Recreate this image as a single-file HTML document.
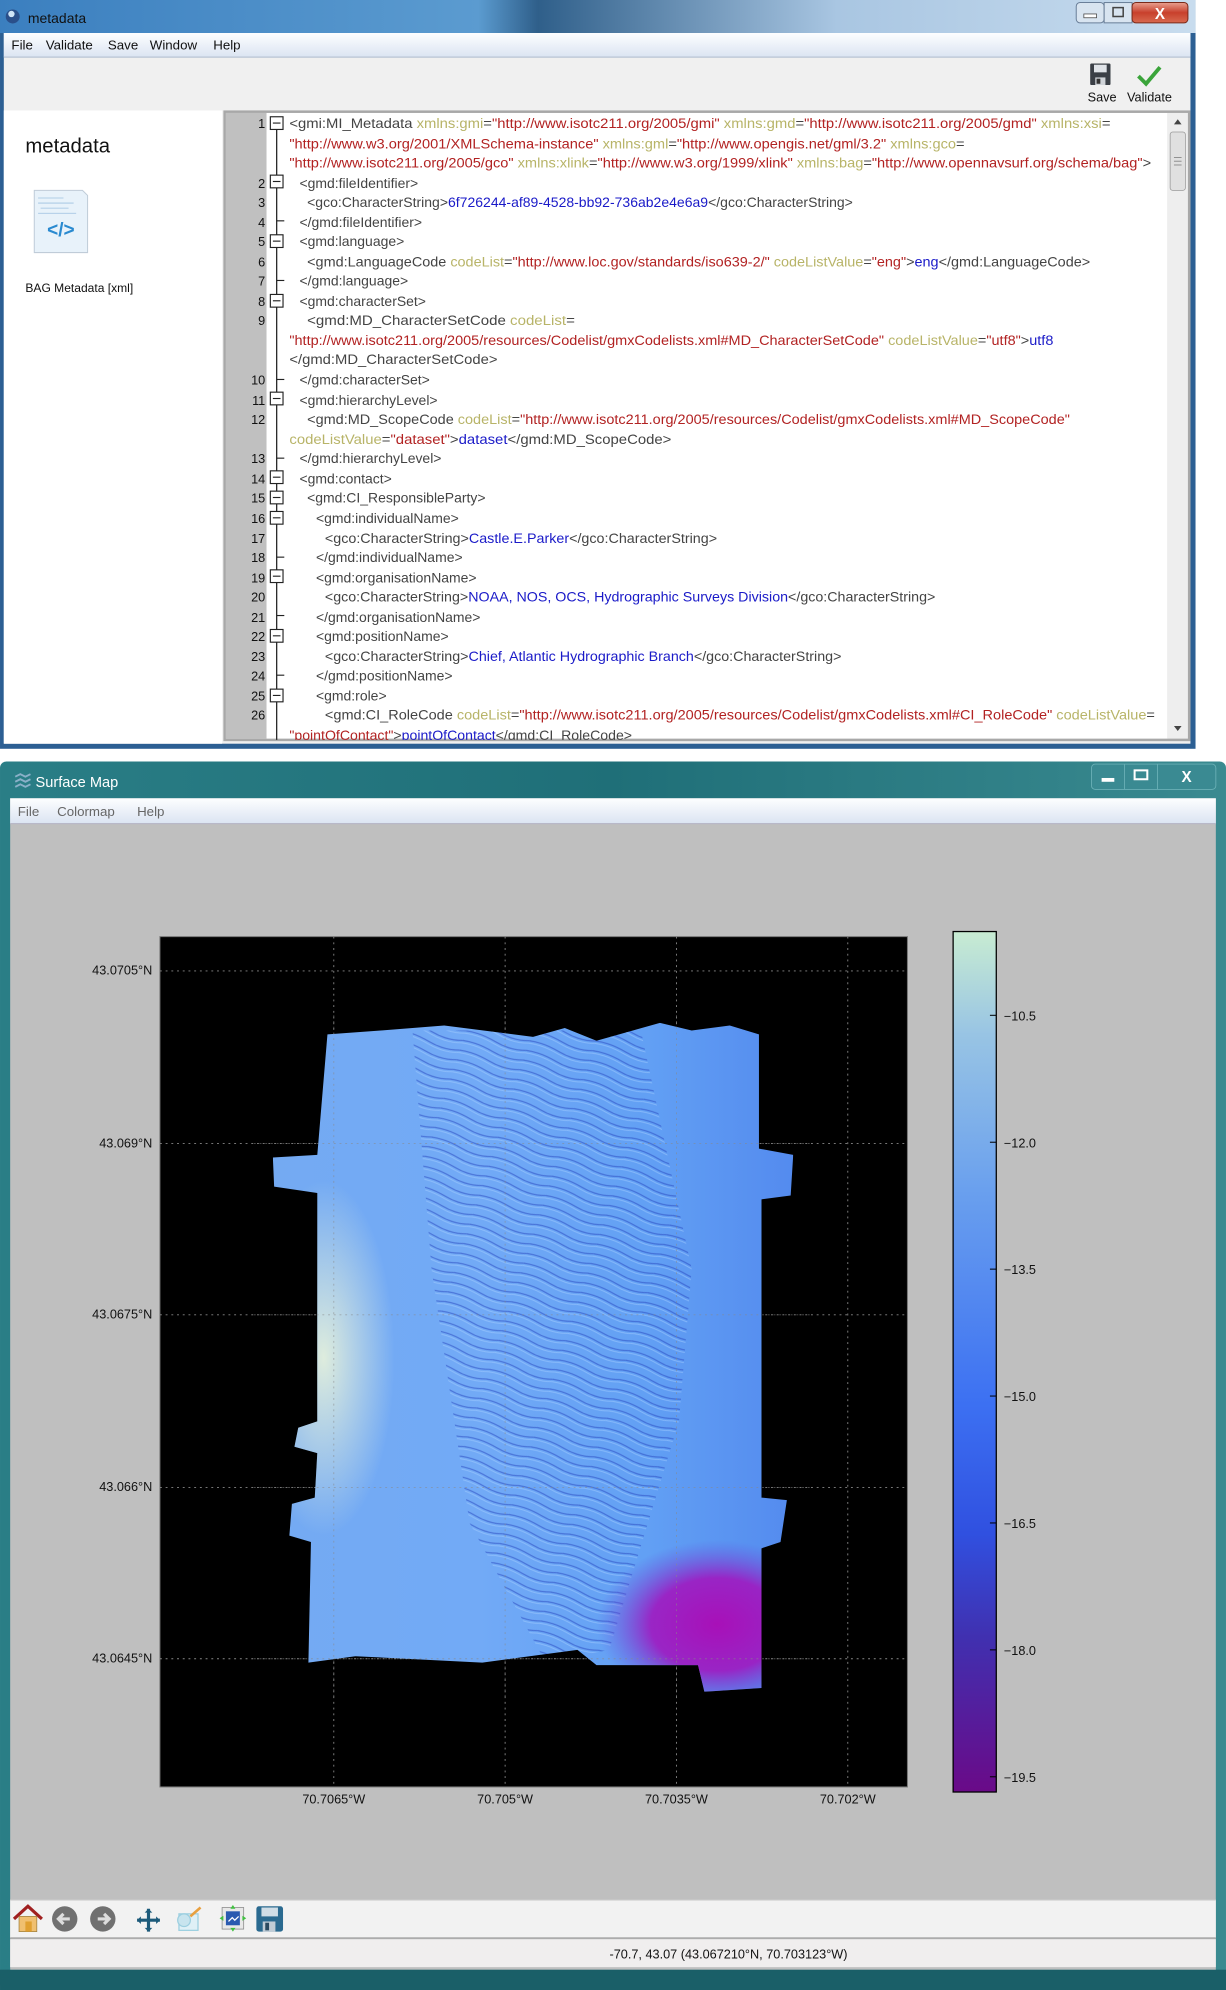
<!DOCTYPE html>
<html><head><meta charset="utf-8"><style>
html,body{margin:0;padding:0;background:#fff;width:1226px;height:1990px;overflow:hidden}
svg{display:block}
text{font-family:"Liberation Sans",sans-serif}
</style></head><body>
<svg width="1226" height="1990" viewBox="0 0 966 1568" xmlns="http://www.w3.org/2000/svg">
<defs>
<linearGradient id="tb1" x1="0" x2="1" y1="0" y2="0">
<stop offset="0" stop-color="#3b7fbf"/><stop offset="0.4" stop-color="#5b9bd0"/><stop offset="0.45" stop-color="#2f5f8a"/><stop offset="0.7" stop-color="#a9c6e2"/><stop offset="1" stop-color="#c8dcee"/></linearGradient>
<linearGradient id="menu1" x1="0" x2="0" y1="0" y2="1"><stop offset="0" stop-color="#fdfeff"/><stop offset="1" stop-color="#dbe4f2"/></linearGradient>
<linearGradient id="teal" x1="0" x2="1" y1="0" y2="0"><stop offset="0" stop-color="#2a7e86"/><stop offset="0.5" stop-color="#1f6f78"/><stop offset="1" stop-color="#3a8a90"/></linearGradient>
<linearGradient id="close" x1="0" x2="0" y1="0" y2="1"><stop offset="0" stop-color="#e8a090"/><stop offset="0.5" stop-color="#c8402c"/><stop offset="1" stop-color="#d86a50"/></linearGradient>
<linearGradient id="cbar" x1="0" x2="0" y1="0" y2="1">
<stop offset="0" stop-color="#c8ecd2"/><stop offset="0.12" stop-color="#98c4e4"/><stop offset="0.3" stop-color="#6aa0ee"/><stop offset="0.55" stop-color="#3c70f2"/><stop offset="0.7" stop-color="#3050e0"/><stop offset="0.82" stop-color="#4030b0"/><stop offset="1" stop-color="#6a0a88"/></linearGradient>
<linearGradient id="mapg" x1="0" x2="1" y1="0" y2="0">
<stop offset="0" stop-color="#74aaf2"/><stop offset="0.4" stop-color="#72aaf6"/><stop offset="0.7" stop-color="#62a0f4"/><stop offset="1" stop-color="#5288ee"/></linearGradient>
<radialGradient id="pale" cx="255" cy="1070" r="70" gradientUnits="userSpaceOnUse" gradientTransform="translate(255 1070) scale(0.8 2) translate(-255 -1070)">
<stop offset="0" stop-color="#e4f0dc" stop-opacity="0.95"/><stop offset="1" stop-color="#e4f0dc" stop-opacity="0"/></radialGradient>
<radialGradient id="purp" cx="565" cy="1280" r="95" gradientUnits="userSpaceOnUse" gradientTransform="translate(565 1280) scale(1 0.7) translate(-565 -1280)">
<stop offset="0" stop-color="#a810b8"/><stop offset="0.55" stop-color="#a018c0" stop-opacity="0.9"/><stop offset="1" stop-color="#6050e0" stop-opacity="0"/></radialGradient>
<pattern id="rip" width="50" height="8" patternUnits="userSpaceOnUse" patternTransform="rotate(18)">
<path d="M0 3 Q12 1 25 4 T50 3" fill="none" stroke="#2a48c0" stroke-width="1" opacity="0.55"/>
<path d="M0 5 Q12 3 25 6 T50 5" fill="none" stroke="#a8d0ff" stroke-width="0.8" opacity="0.5"/></pattern>
<clipPath id="edclip"><rect x="177" y="88" width="745" height="495"/></clipPath>
<clipPath id="mapclip"><polygon points="258,815 300,812 350,808 420,817 445,810 470,820 520,806 545,812 575,808 598,815 598,905 625,910 623,942 600,945 600,1180 620,1182 615,1215 600,1220 600,1330 555,1333 550,1312 470,1312 455,1300 380,1310 280,1305 243,1310 245,1215 228,1210 230,1185 248,1180 250,1145 232,1140 235,1125 250,1120 250,940 216,935 215,912 250,910"/></clipPath>
</defs>

<!-- TOP WINDOW -->
<rect x="0" y="0" width="942" height="590" fill="#2c5f93"/>
<rect x="0" y="0" width="942" height="26" fill="url(#tb1)"/>
<circle cx="10" cy="13" r="5.5" fill="#2a4f8a"/><circle cx="9" cy="11" r="2.5" fill="#cfe4f6"/>
<text x="22" y="18" font-size="11" fill="#111">metadata</text>
<rect x="848" y="2" width="22" height="16" rx="3" fill="#d8e4f0" stroke="#6a7f99" stroke-width="0.8"/>
<rect x="854" y="11" width="10" height="3" fill="#fff" stroke="#444" stroke-width="0.6"/>
<rect x="870" y="2" width="22" height="16" fill="#d8e4f0" stroke="#6a7f99" stroke-width="0.8"/>
<rect x="877" y="6" width="8" height="7" fill="none" stroke="#444" stroke-width="1.2"/>
<rect x="892" y="2" width="44" height="16" rx="3" fill="url(#close)" stroke="#7a2a1a" stroke-width="0.8"/>
<text x="914" y="15" font-size="12" font-weight="bold" fill="#fff" text-anchor="middle">X</text>
<rect x="3" y="26" width="935" height="560" fill="#f0f0f0"/>
<rect x="3" y="26" width="935" height="19" fill="url(#menu1)"/>
<line x1="3" y1="45" x2="938" y2="45" fill="none" stroke="#b8c4d4"/>
<g font-size="10.5" fill="#111"><text x="9" y="39">File</text><text x="36" y="39">Validate</text><text x="85" y="39">Save</text><text x="118" y="39">Window</text><text x="168" y="39">Help</text></g>
<rect x="859" y="50" width="16" height="17" rx="1" fill="#3a3f46"/><rect x="862" y="51" width="10" height="6" fill="#dfe3e8"/><rect x="863" y="61" width="8" height="6" fill="#cfd3d8"/><rect x="864" y="62" width="3" height="4" fill="#333"/>
<path d="M897 60 L903 66 L914 53" fill="none" stroke="#3aa43a" stroke-width="3"/>
<g font-size="10" fill="#111"><text x="857" y="80">Save</text><text x="888" y="80">Validate</text></g>
<rect x="3" y="87" width="172" height="499" fill="#fff"/>
<text x="20" y="120" font-size="16" fill="#111">metadata</text>
<path d="M27 150 L65 150 L69 154 L69 199 L27 199 Z" fill="#e8f2fa" stroke="#c0ccd8" stroke-width="0.8"/>
<g stroke="#9cc0e0" stroke-width="0.6"><line x1="30" y1="156" x2="50" y2="156"/><line x1="30" y1="160" x2="58" y2="160"/><line x1="32" y1="164" x2="54" y2="164"/><line x1="30" y1="168" x2="60" y2="168"/></g>
<text x="48" y="186" font-size="15" font-weight="bold" fill="#2a8ad0" text-anchor="middle">&lt;/&gt;</text>
<text x="20" y="230" font-size="9.5" fill="#111">BAG Metadata [xml]</text>
<rect x="176" y="87" width="762" height="497" fill="#a8a8a8"/>
<rect x="178" y="89" width="742" height="493" fill="#fff"/>
<rect x="178" y="89" width="32" height="493" fill="#c0c0c0"/>
<rect x="920" y="89" width="16" height="493" fill="#eeeeee"/>
<path d="M925 98 L928 94 L931 98 Z" fill="#444"/><path d="M925 572 L928 576 L931 572 Z" fill="#444"/>
<rect x="922" y="104" width="12" height="46" rx="2" fill="#e0e0e0" stroke="#999" stroke-width="0.6"/>
<g stroke="#777" stroke-width="0.6"><line x1="925" y1="124" x2="931" y2="124"/><line x1="925" y1="127" x2="931" y2="127"/><line x1="925" y1="130" x2="931" y2="130"/></g>
<g clip-path="url(#edclip)">
<line x1="218" y1="97" x2="218" y2="590" stroke="#222" stroke-width="1"/>
<g font-size="10" fill="#111" text-anchor="end">
<text x="209" y="101">1</text><text x="209" y="148">2</text><text x="209" y="163">3</text><text x="209" y="179">4</text><text x="209" y="194">5</text><text x="209" y="210">6</text><text x="209" y="225">7</text><text x="209" y="241">8</text><text x="209" y="256">9</text><text x="209" y="303">10</text><text x="209" y="319">11</text><text x="209" y="334">12</text><text x="209" y="365">13</text><text x="209" y="381">14</text><text x="209" y="396">15</text><text x="209" y="412">16</text><text x="209" y="428">17</text><text x="209" y="443">18</text><text x="209" y="459">19</text><text x="209" y="474">20</text><text x="209" y="490">21</text><text x="209" y="505">22</text><text x="209" y="521">23</text><text x="209" y="536">24</text><text x="209" y="552">25</text><text x="209" y="567">26</text>
</g>
<g fill="#fff" stroke="#222" stroke-width="0.9">
<rect x="213" y="92" width="10" height="10"/><rect x="213" y="138" width="10" height="10"/><rect x="213" y="185" width="10" height="10"/><rect x="213" y="232" width="10" height="10"/><rect x="213" y="309" width="10" height="10"/><rect x="213" y="371" width="10" height="10"/><rect x="213" y="387" width="10" height="10"/><rect x="213" y="403" width="10" height="10"/><rect x="213" y="449" width="10" height="10"/><rect x="213" y="496" width="10" height="10"/><rect x="213" y="543" width="10" height="10"/>
</g>
<g stroke="#222" stroke-width="0.9">
<line x1="215" y1="97" x2="221" y2="97"/><line x1="215" y1="143" x2="221" y2="143"/><line x1="215" y1="190" x2="221" y2="190"/><line x1="215" y1="237" x2="221" y2="237"/><line x1="215" y1="314" x2="221" y2="314"/><line x1="215" y1="376" x2="221" y2="376"/><line x1="215" y1="392" x2="221" y2="392"/><line x1="215" y1="408" x2="221" y2="408"/><line x1="215" y1="454" x2="221" y2="454"/><line x1="215" y1="501" x2="221" y2="501"/><line x1="215" y1="548" x2="221" y2="548"/>
<line x1="218" y1="174" x2="224" y2="174"/><line x1="218" y1="221" x2="224" y2="221"/><line x1="218" y1="299" x2="224" y2="299"/><line x1="218" y1="361" x2="224" y2="361"/><line x1="218" y1="439" x2="224" y2="439"/><line x1="218" y1="485" x2="224" y2="485"/><line x1="218" y1="532" x2="224" y2="532"/>
</g>
<g font-size="11" fill="#444">
<text x="228" y="101" textLength="647" lengthAdjust="spacingAndGlyphs">&lt;gmi:MI_Metadata  <tspan fill="#b8b468">xmlns:gmi</tspan>=<tspan fill="#b22222">"http://www.isotc211.org/2005/gmi"</tspan>  <tspan fill="#b8b468">xmlns:gmd</tspan>=<tspan fill="#b22222">"http://www.isotc211.org/2005/gmd"</tspan>  <tspan fill="#b8b468">xmlns:xsi</tspan>=</text>
<text x="228" y="117" textLength="532" lengthAdjust="spacingAndGlyphs"><tspan fill="#b22222">"http://www.w3.org/2001/XMLSchema-instance"</tspan>  <tspan fill="#b8b468">xmlns:gml</tspan>=<tspan fill="#b22222">"http://www.opengis.net/gml/3.2"</tspan>  <tspan fill="#b8b468">xmlns:gco</tspan>=</text>
<text x="228" y="132" textLength="679" lengthAdjust="spacingAndGlyphs"><tspan fill="#b22222">"http://www.isotc211.org/2005/gco"</tspan>  <tspan fill="#b8b468">xmlns:xlink</tspan>=<tspan fill="#b22222">"http://www.w3.org/1999/xlink"</tspan>  <tspan fill="#b8b468">xmlns:bag</tspan>=<tspan fill="#b22222">"http://www.opennavsurf.org/schema/bag"</tspan>&gt;</text>
<text x="236" y="148">&lt;gmd:fileIdentifier&gt;</text>
<text x="242" y="163" textLength="430" lengthAdjust="spacingAndGlyphs">&lt;gco:CharacterString&gt;<tspan fill="#1a1ac8">6f726244-af89-4528-bb92-736ab2e4e6a9</tspan>&lt;/gco:CharacterString&gt;</text>
<text x="236" y="179">&lt;/gmd:fileIdentifier&gt;</text>
<text x="236" y="194">&lt;gmd:language&gt;</text>
<text x="242" y="210" textLength="617" lengthAdjust="spacingAndGlyphs">&lt;gmd:LanguageCode  <tspan fill="#b8b468">codeList</tspan>=<tspan fill="#b22222">"http://www.loc.gov/standards/iso639-2/"</tspan>  <tspan fill="#b8b468">codeListValue</tspan>=<tspan fill="#b22222">"eng"</tspan>&gt;<tspan fill="#1a1ac8">eng</tspan>&lt;/gmd:LanguageCode&gt;</text>
<text x="236" y="225">&lt;/gmd:language&gt;</text>
<text x="236" y="241">&lt;gmd:characterSet&gt;</text>
<text x="242" y="256" textLength="211" lengthAdjust="spacingAndGlyphs">&lt;gmd:MD_CharacterSetCode  <tspan fill="#b8b468">codeList</tspan>=</text>
<text x="228" y="272" textLength="602" lengthAdjust="spacingAndGlyphs"><tspan fill="#b22222">"http://www.isotc211.org/2005/resources/Codelist/gmxCodelists.xml#MD_CharacterSetCode"</tspan>  <tspan fill="#b8b468">codeListValue</tspan>=<tspan fill="#b22222">"utf8"</tspan>&gt;<tspan fill="#1a1ac8">utf8</tspan></text>
<text x="228" y="287" textLength="164" lengthAdjust="spacingAndGlyphs">&lt;/gmd:MD_CharacterSetCode&gt;</text>
<text x="236" y="303">&lt;/gmd:characterSet&gt;</text>
<text x="236" y="319">&lt;gmd:hierarchyLevel&gt;</text>
<text x="242" y="334" textLength="601" lengthAdjust="spacingAndGlyphs">&lt;gmd:MD_ScopeCode  <tspan fill="#b8b468">codeList</tspan>=<tspan fill="#b22222">"http://www.isotc211.org/2005/resources/Codelist/gmxCodelists.xml#MD_ScopeCode"</tspan></text>
<text x="228" y="350" textLength="301" lengthAdjust="spacingAndGlyphs"><tspan fill="#b8b468">codeListValue</tspan>=<tspan fill="#b22222">"dataset"</tspan>&gt;<tspan fill="#1a1ac8">dataset</tspan>&lt;/gmd:MD_ScopeCode&gt;</text>
<text x="236" y="365">&lt;/gmd:hierarchyLevel&gt;</text>
<text x="236" y="381">&lt;gmd:contact&gt;</text>
<text x="242" y="396">&lt;gmd:CI_ResponsibleParty&gt;</text>
<text x="249" y="412">&lt;gmd:individualName&gt;</text>
<text x="256" y="428" textLength="309" lengthAdjust="spacingAndGlyphs">&lt;gco:CharacterString&gt;<tspan fill="#1a1ac8">Castle.E.Parker</tspan>&lt;/gco:CharacterString&gt;</text>
<text x="249" y="443">&lt;/gmd:individualName&gt;</text>
<text x="249" y="459">&lt;gmd:organisationName&gt;</text>
<text x="256" y="474" textLength="481" lengthAdjust="spacingAndGlyphs">&lt;gco:CharacterString&gt;<tspan fill="#1a1ac8">NOAA, NOS, OCS, Hydrographic Surveys Division</tspan>&lt;/gco:CharacterString&gt;</text>
<text x="249" y="490">&lt;/gmd:organisationName&gt;</text>
<text x="249" y="505">&lt;gmd:positionName&gt;</text>
<text x="256" y="521" textLength="407" lengthAdjust="spacingAndGlyphs">&lt;gco:CharacterString&gt;<tspan fill="#1a1ac8">Chief, Atlantic Hydrographic Branch</tspan>&lt;/gco:CharacterString&gt;</text>
<text x="249" y="536">&lt;/gmd:positionName&gt;</text>
<text x="249" y="552">&lt;gmd:role&gt;</text>
<text x="256" y="567" textLength="654" lengthAdjust="spacingAndGlyphs">&lt;gmd:CI_RoleCode  <tspan fill="#b8b468">codeList</tspan>=<tspan fill="#b22222">"http://www.isotc211.org/2005/resources/Codelist/gmxCodelists.xml#CI_RoleCode"</tspan>  <tspan fill="#b8b468">codeListValue</tspan>=</text>
<text x="228" y="583" textLength="270" lengthAdjust="spacingAndGlyphs"><tspan fill="#b22222">"pointOfContact"</tspan>&gt;<tspan fill="#1a1ac8">pointOfContact</tspan>&lt;/gmd:CI_RoleCode&gt;</text>
</g>
</g>

<!-- BOTTOM WINDOW -->
<rect x="0" y="600" width="966" height="968" rx="5" fill="url(#teal)"/>
<rect x="0" y="1552" width="966" height="16" fill="#1a5f68"/>
<path d="M12 612 l4 -2 l4 2 l4 -2 M12 616 l4 -2 l4 2 l4 -2 M12 620 l4 -2 l4 2 l4 -2" fill="none" stroke="#8ab0c8" stroke-width="1.5"/>
<text x="28" y="620" font-size="11.5" fill="#fff">Surface Map</text>
<rect x="860" y="602" width="98" height="20" rx="3" fill="#3a8a92" stroke="#6ab0b6" stroke-width="0.7"/>
<line x1="886" y1="602" x2="886" y2="622" stroke="#6ab0b6" stroke-width="0.7"/><line x1="912" y1="602" x2="912" y2="622" stroke="#6ab0b6" stroke-width="0.7"/>
<rect x="868" y="613" width="10" height="3" fill="#fff"/>
<rect x="894" y="607" width="10" height="7" fill="none" stroke="#fff" stroke-width="1.6"/>
<text x="935" y="616" font-size="12" font-weight="bold" fill="#fff" text-anchor="middle">X</text>
<rect x="8" y="629" width="950" height="923" fill="#bfbfbf"/>
<rect x="8" y="629" width="950" height="20" fill="url(#menu1)"/>
<line x1="8" y1="649" x2="958" y2="649" stroke="#b8b8c8"/>
<g font-size="10.5" fill="#666"><text x="14" y="643">File</text><text x="45" y="643">Colormap</text><text x="108" y="643">Help</text></g>
<rect x="126" y="738" width="589" height="670" fill="#000" stroke="#777" stroke-width="0.8"/>
<g stroke="#888" stroke-width="0.7" stroke-dasharray="1.5,3">
<line x1="126" y1="765" x2="715" y2="765"/><line x1="126" y1="901" x2="715" y2="901"/><line x1="126" y1="1036" x2="715" y2="1036"/><line x1="126" y1="1172" x2="715" y2="1172"/><line x1="126" y1="1307" x2="715" y2="1307"/>
<line x1="263" y1="738" x2="263" y2="1408"/><line x1="398" y1="738" x2="398" y2="1408"/><line x1="533" y1="738" x2="533" y2="1408"/><line x1="668" y1="738" x2="668" y2="1408"/>
</g>
<g clip-path="url(#mapclip)">
<rect x="200" y="800" width="440" height="540" fill="url(#mapg)"/>
<rect x="200" y="800" width="440" height="540" fill="url(#pale)"/>
<polygon points="325,812 505,812 545,1000 535,1120 480,1300 430,1310 370,1200 340,1000" fill="url(#rip)"/>
<rect x="440" y="1180" width="200" height="160" fill="url(#purp)"/>
</g>
<g stroke="#888" stroke-width="0.7" stroke-dasharray="1.5,3" opacity="0.6">
<line x1="200" y1="901" x2="640" y2="901"/><line x1="200" y1="1036" x2="640" y2="1036"/><line x1="200" y1="1172" x2="640" y2="1172"/><line x1="200" y1="1307" x2="640" y2="1307"/><line x1="263" y1="800" x2="263" y2="1340"/><line x1="398" y1="800" x2="398" y2="1340"/><line x1="533" y1="800" x2="533" y2="1340"/>
</g>
<g font-size="10" fill="#111" text-anchor="end">
<text x="120" y="768">43.0705°N</text><text x="120" y="904">43.069°N</text><text x="120" y="1039">43.0675°N</text><text x="120" y="1175">43.066°N</text><text x="120" y="1310">43.0645°N</text>
</g>
<g font-size="10" fill="#111" text-anchor="middle">
<text x="263" y="1421">70.7065°W</text><text x="398" y="1421">70.705°W</text><text x="533" y="1421">70.7035°W</text><text x="668" y="1421">70.702°W</text>
</g>
<rect x="751" y="734" width="34" height="678" fill="url(#cbar)" stroke="#000" stroke-width="1"/>
<g stroke="#000" stroke-width="0.8"><line x1="780" y1="800" x2="785" y2="800"/><line x1="780" y1="900" x2="785" y2="900"/><line x1="780" y1="1000" x2="785" y2="1000"/><line x1="780" y1="1100" x2="785" y2="1100"/><line x1="780" y1="1200" x2="785" y2="1200"/><line x1="780" y1="1300" x2="785" y2="1300"/><line x1="780" y1="1400" x2="785" y2="1400"/></g>
<g font-size="10" fill="#111">
<text x="791" y="804">−10.5</text><text x="791" y="904">−12.0</text><text x="791" y="1004">−13.5</text><text x="791" y="1104">−15.0</text><text x="791" y="1204">−16.5</text><text x="791" y="1304">−18.0</text><text x="791" y="1404">−19.5</text>
</g>
<rect x="8" y="1497" width="950" height="30" fill="#f2f2f2"/>
<line x1="8" y1="1497" x2="958" y2="1497" stroke="#c8c8c8"/>
<line x1="8" y1="1527" x2="958" y2="1527" stroke="#a0a0a0"/>
<rect x="8" y="1528" width="950" height="22" fill="#f0eeee"/>
<path d="M11 1512 L22 1502 L33 1512" fill="none" stroke="#a02020" stroke-width="2.5"/>
<rect x="15" y="1510" width="14" height="12" fill="#f0c070" stroke="#a08040" stroke-width="0.6"/><rect x="20" y="1514" width="5" height="8" fill="#e0a030"/>
<circle cx="51" cy="1512" r="10" fill="#707070"/><path d="M55 1512 L47 1512 M50 1508 L46 1512 L50 1516" stroke="#ddd" stroke-width="2.5" fill="none"/>
<circle cx="81" cy="1512" r="10" fill="#707070"/><path d="M77 1512 L85 1512 M82 1508 L86 1512 L82 1516" stroke="#ddd" stroke-width="2.5" fill="none"/>
<path d="M108 1513 H126 M117 1504 V1522" stroke="#1c5a7a" stroke-width="2.5"/>
<path d="M108 1513 l3 -3 v6 z M126 1513 l-3 -3 v6z M117 1504 l-3 3 h6z M117 1522 l-3 -3 h6z" fill="#1c5a7a"/>
<rect x="141" y="1508" width="15" height="13" fill="#dff0f6" stroke="#9ccfe0"/><circle cx="145" cy="1513" r="5" fill="#c8e4ee" stroke="#9ccfe0"/><line x1="150" y1="1510" x2="158" y2="1503" stroke="#e8a040" stroke-width="2"/>
<rect x="175" y="1503" width="17" height="17" fill="#e8e8e8" stroke="#888" stroke-width="0.6"/><rect x="178" y="1506" width="11" height="11" fill="#2a5ab0"/><path d="M180 1514 l3 -3 l2 2 l3 -3" fill="none" stroke="#fff" stroke-width="1"/><path d="M183.5 1501 l-2 3 h4z M183.5 1522 l-2 -3 h4z M173 1511.5 l3 -2 v4z M194 1511.5 l-3 -2 v4z" fill="#40c040"/>
<rect x="202" y="1502" width="21" height="20" rx="2" fill="#2a6a90"/><rect x="206" y="1503" width="13" height="7" fill="#d0dde6"/><rect x="207" y="1514" width="10" height="8" fill="#c0ccd6"/><rect x="209" y="1515" width="3" height="6" fill="#2a4a60"/>
<text x="574" y="1543" font-size="10" fill="#111" text-anchor="middle">-70.7, 43.07 (43.067210°N, 70.703123°W)</text>
</svg>
</body></html>
